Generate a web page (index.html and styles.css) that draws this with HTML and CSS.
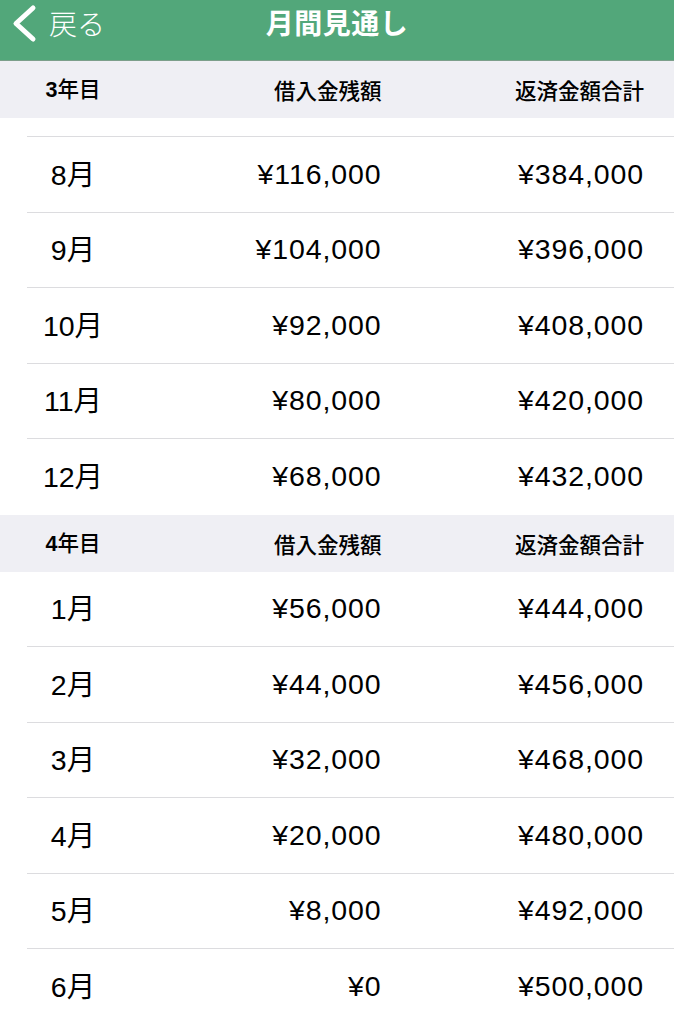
FILE: index.html
```html
<!DOCTYPE html>
<html lang="ja">
<head>
    <meta charset="UTF-8">
    <meta name="viewport" content="width=device-width, initial-scale=1.0">
    <title>月間見通し</title>
    <link rel="stylesheet" href="styles.css">
</head>
<body>
    <header class="nav">
        <a class="nav-back" href="#">
            <svg class="chevron" width="26" height="40" viewBox="0 0 26 40">
                <polyline points="22,5 5,20.5 22,36" fill="none" stroke="#fff" stroke-width="5" stroke-linecap="round" stroke-linejoin="round"/>
            </svg>
            <span>戻る</span>
        </a>
        <h1 class="nav-title">月間見通し</h1>
        <div></div>
    </header>

    <section class="section">
        <div class="section-head">
            <div class="col-month"><b>3</b>年目</div>
            <div class="col-num">借入金残額</div>
            <div class="col-num">返済金額合計</div>
        </div>
        <div class="row row-hidden"></div>
        <div class="row">
            <div class="col-month">8月</div>
            <div class="col-num">¥116,000</div>
            <div class="col-num">¥384,000</div>
        </div>
        <div class="row">
            <div class="col-month">9月</div>
            <div class="col-num">¥104,000</div>
            <div class="col-num">¥396,000</div>
        </div>
        <div class="row">
            <div class="col-month">10月</div>
            <div class="col-num">¥92,000</div>
            <div class="col-num">¥408,000</div>
        </div>
        <div class="row">
            <div class="col-month">11月</div>
            <div class="col-num">¥80,000</div>
            <div class="col-num">¥420,000</div>
        </div>
        <div class="row">
            <div class="col-month">12月</div>
            <div class="col-num">¥68,000</div>
            <div class="col-num">¥432,000</div>
        </div>
    </section>

    <section class="section">
        <div class="section-head">
            <div class="col-month"><b>4</b>年目</div>
            <div class="col-num">借入金残額</div>
            <div class="col-num">返済金額合計</div>
        </div>
        <div class="row">
            <div class="col-month">1月</div>
            <div class="col-num">¥56,000</div>
            <div class="col-num">¥444,000</div>
        </div>
        <div class="row">
            <div class="col-month">2月</div>
            <div class="col-num">¥44,000</div>
            <div class="col-num">¥456,000</div>
        </div>
        <div class="row">
            <div class="col-month">3月</div>
            <div class="col-num">¥32,000</div>
            <div class="col-num">¥468,000</div>
        </div>
        <div class="row">
            <div class="col-month">4月</div>
            <div class="col-num">¥20,000</div>
            <div class="col-num">¥480,000</div>
        </div>
        <div class="row">
            <div class="col-month">5月</div>
            <div class="col-num">¥8,000</div>
            <div class="col-num">¥492,000</div>
        </div>
        <div class="row">
            <div class="col-month">6月</div>
            <div class="col-num">¥0</div>
            <div class="col-num">¥500,000</div>
        </div>
    </section>
</body>
</html>
```

FILE: styles.css
```css
/* Base */
* {
    margin: 0;
    padding: 0;
    box-sizing: border-box;
}

body {
    background: #fff;
    color: #000;
    font-family: "Liberation Sans", "Noto Sans CJK JP", sans-serif;
    overflow: hidden;
}

/* Navigation bar */
.nav {
    height: 61px;
    background-color: #52a77a;
    border-bottom: 1px solid #7c9f8b;
    display: grid;
    grid-template-columns: 1fr auto 1fr;
    align-items: start;
    color: #fff;
}

.nav-back {
    display: flex;
    align-items: center;
    gap: 12px;
    height: 45px;
    padding-left: 11px;
    color: #fff;
    text-decoration: none;
    font-family: "Noto Sans CJK JP", sans-serif;
    font-size: 28px;
    font-weight: 300;
}

.chevron {
    display: block;
}

.nav-title {
    height: 45px;
    line-height: 45px;
    font-family: "Noto Sans CJK JP", sans-serif;
    font-size: 28px;
    font-weight: 700;
    letter-spacing: 0.5px;
}

/* Sections */
.section-head {
    height: 57px;
    background-color: #efeff4;
    display: grid;
    grid-template-columns: 92px 1fr 1fr;
    align-items: center;
    padding: 0 30px 0 27px;
    font-family: "Noto Sans CJK JP", sans-serif;
    font-size: 21.5px;
    font-weight: 500;
}

.section-head b {
    font-family: "Liberation Sans", sans-serif;
    font-weight: 700;
}

.row {
    height: 75.5px;
    margin-left: 27px;
    padding-right: 30px;
    display: grid;
    grid-template-columns: 92px 1fr 1fr;
    align-items: center;
    border-bottom: 1.5px solid #dcdcdf;
    font-size: 28.5px;
    letter-spacing: 0.9px;
}

.row:last-child {
    border-bottom: none;
}

.row-hidden {
    height: 19px;
}

.col-month {
    text-align: center;
    letter-spacing: 0;
    padding-bottom: 4px;
}

.col-num {
    text-align: right;
}
```
